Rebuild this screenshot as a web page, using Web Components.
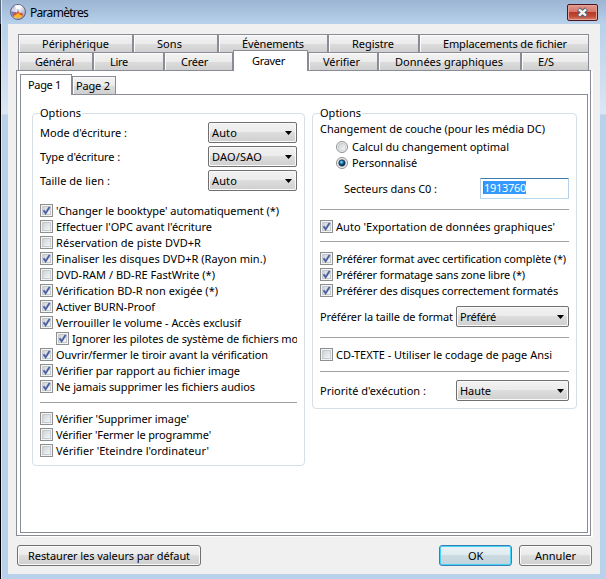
<!DOCTYPE html>
<html lang="fr">
<head>
<meta charset="utf-8">
<title>Paramètres</title>
<style>
html,body{margin:0;width:606px;height:579px;overflow:hidden}
body{font:11px/16px "Noto Sans","Open Sans",sans-serif;color:#000}
</style>
</head>
<body>
<app-window>
  <tab-strip slot="tabs">
    <tab-item w="115" tw="67" tx="24">Périphérique</tab-item><tab-item w="85" tw="25" tx="24">Sons</tab-item><tab-item w="110" tw="62" tx="24">Évènements</tab-item><tab-item w="91" tw="42" tx="24">Registre</tab-item><tab-item w="170" tw="124" tx="24">Emplacements de fichier</tab-item>
  </tab-strip>
  <tab-strip slot="tabs">
    <tab-item w="75" tw="39" tx="17">Général</tab-item><tab-item w="71" tw="18" tx="17">Lire</tab-item><tab-item w="69" tw="27" tx="17">Créer</tab-item><tab-item w="75" tw="33" tx="19" active>Graver</tab-item><tab-item w="70" tw="37" tx="15">Vérifier</tab-item><tab-item w="143" tw="108" tx="17">Données graphiques</tab-item><tab-item w="68" tw="16" tx="17">E/S</tab-item>
  </tab-strip>
  <tab-strip slot="pages" class="pages">
    <tab-item w="52" tw="33" tx="8" active>Page 1</tab-item><tab-item w="44" tw="34" tx="4">Page 2</tab-item>
  </tab-strip>

  <group-box slot="content" w="273" h="353" legend="Options">
    <form-row h="24" top="8"><fit-text w="87">Mode d'écriture :</fit-text><combo-box w="89" tw="25">Auto</combo-box></form-row>
    <form-row h="24"><fit-text w="80">Type d'écriture :</fit-text><combo-box w="89" tw="50">DAO/SAO</combo-box></form-row>
    <form-row h="24"><fit-text w="70">Taille de lien :</fit-text><combo-box w="89" tw="25">Auto</combo-box></form-row>
    <check-box checked top="10" tw="223">'Changer le booktype' automatiquement (*)</check-box>
    <check-box tw="156">Effectuer l'OPC avant l'écriture</check-box>
    <check-box tw="145">Réservation de piste DVD+R</check-box>
    <check-box checked tw="210">Finaliser les disques DVD+R (Rayon min.)</check-box>
    <check-box tw="159">DVD-RAM / BD-RE FastWrite (*)</check-box>
    <check-box checked tw="162">Vérification BD-R non exigée (*)</check-box>
    <check-box checked tw="99">Activer BURN-Proof</check-box>
    <check-box checked tw="185">Verrouiller le volume - Accès exclusif</check-box>
    <check-box checked indent="16" tw="226">Ignorer les pilotes de système de fichiers mo</check-box>
    <check-box checked tw="212">Ouvrir/fermer le tiroir avant la vérification</check-box>
    <check-box checked tw="184">Vérifier par rapport au fichier image</check-box>
    <check-box checked tw="199">Ne jamais supprimer les fichiers audios</check-box>
    <rule-line top="7" bottom="8"></rule-line>
    <check-box tw="133">Vérifier 'Supprimer image'</check-box>
    <check-box tw="155">Vérifier 'Fermer le programme'</check-box>
    <check-box tw="153">Vérifier 'Eteindre l'ordinateur'</check-box>
  </group-box>

  <group-box slot="content" w="265" h="296" legend="Options">
    <form-row h="16" top="8"><fit-text w="225">Changement de couche (pour les média DC)</fit-text></form-row>
    <radio-button top="2" tw="157">Calcul du changement optimal</radio-button>
    <radio-button checked tw="65">Personnalisé</radio-button>
    <form-row h="21" top="7" indent="24"><fit-text w="93">Secteurs dans C0 :</fit-text><text-input w="89" tw="43">1913760</text-input></form-row>
    <rule-line top="10" bottom="9"></rule-line>
    <check-box checked tw="219">Auto 'Exportation de données graphiques'</check-box>
    <rule-line top="6" bottom="9"></rule-line>
    <check-box checked tw="230">Préférer format avec certification complète (*)</check-box>
    <check-box checked tw="189">Préférer formatage sans zone libre (*)</check-box>
    <check-box checked tw="222">Préférer des disques correctement formatés</check-box>
    <form-row h="22" top="7"><fit-text w="133">Préférer la taille de format</fit-text><combo-box w="113" tw="36">Préféré</combo-box></form-row>
    <rule-line top="9" bottom="9"></rule-line>
    <check-box tw="216">CD-TEXTE - Utiliser le codage de page Ansi</check-box>
    <rule-line top="8" bottom="8"></rule-line>
    <form-row h="22"><fit-text w="106">Priorité d'exécution :</fit-text><combo-box w="113" tw="31">Haute</combo-box></form-row>
  </group-box>

  <push-button slot="buttons" w="184" tw="162">Restaurer les valeurs par défaut</push-button>
  <push-button slot="buttons" w="73" tw="15" primary>OK</push-button>
  <push-button slot="buttons" w="73" tw="41">Annuler</push-button>
</app-window>

<script>
class Base extends HTMLElement {
  connectedCallback() {
    if (this.shadowRoot) return;
    this.attachShadow({ mode: 'open' }).innerHTML = this.view();
    this.after?.();
  }
  a(name, fallback = 0) { return this.getAttribute(name) ?? fallback; }
}

/* Text whose tracking is adjusted so that the run fills a given width. */
customElements.define('fit-text', class extends Base {
  view() { return `<style>:host{display:block;white-space:pre;flex:none;width:${this.a('w')}px}span{display:inline-block}</style><span><slot></slot></span>`; }
  after() {
    const s = this.shadowRoot.querySelector('span');
    const fit = () => {
      s.style.letterSpacing = '0px';
      const n = this.textContent.length, w = s.getBoundingClientRect().width;
      if (w && n) s.style.letterSpacing = ((+this.a('w') - w) / n).toFixed(3) + 'px';
    };
    requestAnimationFrame(fit);
    fit();
  }
});

customElements.define('tab-strip', class extends Base {
  view() { return `<style>:host{display:flex;height:18px;align-items:flex-end}:host(.pages){height:20px}</style><slot></slot>`; }
});

customElements.define('tab-item', class extends Base {
  view() { return `<style>
    :host{box-sizing:border-box;display:flex;align-items:center;height:18px;width:${this.a('w')}px;flex:none;padding-left:${this.a('tx') - 1}px;
      border:solid #898c95;border-width:1px 1px 0 1px;box-shadow:inset 1px 1px #fcfcfc;
      background:linear-gradient(#f3f3f3,#ebebeb 50%,#dddddd 51%,#cfcfcf)}
    :host([active]){height:21px;margin-bottom:-1px;background:#fff;box-shadow:none;position:relative;z-index:2;padding-bottom:1px}
    fit-text{margin-top:1px}
  </style><fit-text w="${this.a('tw')}">${this.textContent}</fit-text>`; }
});

customElements.define('group-box', class extends Base {
  view() { return `<style>
    :host{box-sizing:border-box;display:flex;flex-direction:column;width:${this.a('w')}px;height:${+this.a('h')}px;border:1px solid #d5dfe5;border-radius:4px;padding:0 7px;flex:none}
    .legend{height:16px;margin-top:-9px;margin-bottom:-8px;display:flex}
    .legend fit-text{background:#fff;padding-right:1px}
  </style><div class="legend"><fit-text w="41">${this.a('legend')}</fit-text></div><slot></slot>`; }
});

customElements.define('form-row', class extends Base {
  view() { return `<style>:host{flex:none;display:flex;justify-content:space-between;align-items:center;height:${this.a('h')}px;margin-top:${this.a('top')}px;padding-left:${this.a('indent')}px}</style><slot></slot>`; }
});

customElements.define('rule-line', class extends Base {
  view() { return `<style>:host{flex:none;display:block;height:1px;background:#a0a0a0;margin:${this.a('top')}px 0 ${this.a('bottom')}px}</style>`; }
});

customElements.define('combo-box', class extends Base {
  view() { return `<style>
    :host{box-sizing:border-box;display:flex;align-items:center;justify-content:space-between;width:${this.a('w')}px;height:21px;flex:none;padding:0 4px 0 3px;margin-bottom:1px;
      border:1px solid #707070;border-radius:2px;box-shadow:inset 0 0 0 1px #fafafa;background:linear-gradient(#f2f2f2,#ebebeb 49%,#dddddd 50%,#cfcfcf)}
  </style><fit-text w="${this.a('tw')}">${this.textContent}</fit-text><svg width="7" height="4"><path d="M0 0h7L3.5 4z"/></svg>`; }
});

customElements.define('check-box', class extends Base {
  view() {
    const mark = this.hasAttribute('checked') ? '<path d="M3.5 6.2L5.6 9.3L9.6 3" fill="none" stroke="#4b619e" stroke-width="1.9"/>' : '';
    return `<style>
    :host{flex:none;display:flex;align-items:center;height:16px;gap:3px;overflow:hidden;margin-top:${this.a('top')}px;padding-left:${this.a('indent')}px}
    svg{flex:none;margin-top:-1px}
  </style><svg width="13" height="13"><defs><linearGradient id="g" x2="1" y2="1"><stop stop-color="#cbcfd5"/><stop offset="1" stop-color="#f8f8f8"/></linearGradient></defs>
    <rect x=".5" y=".5" width="12" height="12" fill="#f4f4f4" stroke="#8e8f8f"/><rect x="2.5" y="2.5" width="8" height="8" fill="url(#g)" stroke="#c5c9d0"/>${mark}</svg><fit-text w="${this.a('tw')}">${this.textContent}</fit-text>`;
  }
});

customElements.define('radio-button', class extends Base {
  view() {
    const on = this.hasAttribute('checked');
    return `<style>
    :host{flex:none;display:flex;align-items:center;height:16px;gap:4px;padding-left:16px;margin-top:${this.a('top')}px}svg{flex:none}
  </style><svg width="12" height="12"><defs><linearGradient id="g" x2="1" y2="1"><stop stop-color="#c9cdd3"/><stop offset="1" stop-color="#fafafa"/></linearGradient>
    <radialGradient id="b" cx=".4" cy=".35"><stop stop-color="#9fe4fb"/><stop offset=".45" stop-color="#2b8fc4"/><stop offset="1" stop-color="#0b2c50"/></radialGradient></defs>
    <circle cx="6" cy="6" r="5.5" fill="#f4f4f4" stroke="#8e8f8f"/><circle cx="6" cy="6" r="3.9" fill="url(#g)" stroke="#c0c5cb" stroke-width=".7"/>${on ? '<circle cx="6" cy="6" r="3.1" fill="url(#b)" stroke="#17375c" stroke-width=".9"/>' : ''}</svg><fit-text w="${this.a('tw')}">${this.textContent}</fit-text>`;
  }
});

customElements.define('text-input', class extends Base {
  view() { return `<style>
    :host{box-sizing:border-box;display:block;width:${this.a('w')}px;height:21px;flex:none;padding:2px;background:#fff;border:1px solid #b5cfe7;border-top-color:#3d7bad;border-bottom-color:#b7d9ed;border-radius:1px}
    .sel{display:flex;align-items:center;width:${this.a('tw')}px;height:13px;background:#39f;color:#fff;box-sizing:border-box;border-left:1px solid #c60}
  </style><div class="sel"><fit-text w="${this.a('tw') - 1}">${this.textContent}</fit-text></div>`; }
});

customElements.define('push-button', class extends Base {
  view() { return `<style>
    :host{box-sizing:border-box;display:flex;align-items:center;justify-content:center;width:${this.a('w')}px;height:21px;flex:none;
      border:1px solid #707070;border-radius:3px;box-shadow:inset 0 0 0 1px #fafafa;background:linear-gradient(#f2f2f2,#ebebeb 49%,#dddddd 50%,#cfcfcf)}
    :host([primary]){border-color:#3c7fb1;box-shadow:inset 0 0 0 1px #42d3fb;margin-left:auto;background:linear-gradient(#eaf1f5,#dfebf0 49%,#ccdbe2 50%,#c2d3db)}
    fit-text{margin-top:1px}
  </style><fit-text w="${this.a('tw')}">${this.textContent}</fit-text>`; }
});

customElements.define('disc-icon', class extends Base {
  view() { return `<style>:host{display:block;width:16px;height:16px}svg{display:block}</style><svg width="16" height="16" viewBox="0 0 16 16">
    <defs><linearGradient id="d" x2="1" y2="1"><stop stop-color="#a4aad2"/><stop offset=".45" stop-color="#eeeef8"/><stop offset="1" stop-color="#77779a"/></linearGradient></defs>
    <circle cx="8" cy="8" r="7.500" fill="url(#d)" stroke="#62627c"/>
    <path d="M8 7L4.500 1.800Q8 .2 12 2z" fill="#fff"/><path d="M1 7.500L7 8L3.500 13.200Q1 11.500 1 7.500z" fill="#8078b0"/>
    <circle cx="8" cy="6.300" r="1.500" fill="#b9bdd6" stroke="#fff" stroke-width=".6"/>
    <path d="M3.500 12.500Q3.200 9.800 5 8.800L6.200 9.400L8 6.600L9.800 9.400L11.400 8.600Q13.400 10 12.600 12.500z" fill="#d2502a"/>
    <path d="M4 11.600L6.200 10.800L8 9L10 10.800L12.300 11.400L11.800 13.300Q8 14.300 4.400 13.300z" fill="#ffb820"/></svg>`; }
});

customElements.define('close-button', class extends Base {
  view() { return `<style>
    :host{box-sizing:border-box;display:flex;align-items:center;justify-content:center;width:31px;height:17px;border:1px solid #4b1620;border-radius:2px;box-shadow:inset 0 0 0 1px #e4a196;
      background:linear-gradient(#e29a90,#d4756a 46%,#bb3924 50%,#c14a36 75%,#d98370)}
  </style><svg width="13" height="11"><path d="M2.500 2L10.500 9M10.500 2L2.500 9" stroke="#59606f" stroke-width="4.400"/><path d="M3 2.400L10 8.600M10 2.400L3 8.600" stroke="#f4f4f4" stroke-width="2.400"/></svg>`; }
});

customElements.define('app-window', class extends Base {
  view() { return `<style>
    :host{box-sizing:border-box;display:flex;flex-direction:column;width:606px;height:579px;padding:0 6px 5px 8px;
      background:linear-gradient(#5f6f80,#4a5a6a 24px,#000 24px) 0 0/1px 100% no-repeat,linear-gradient(#dbe8f5,#dbe8f5) 1px 0/1px 100% no-repeat,
        linear-gradient(#9bb5d3,#a9c3df 12px,#b9d1ea 24px,#b9d1ea 28px,#d9e6f5 110px,#d9e6f5 114px,#b9d1ea 115px)}
    header{height:24px;flex:none;display:flex;align-items:flex-start;padding:0 2px 0 2px}
    disc-icon{margin-top:4px}
    header fit-text{font-size:12px;margin:5px auto 0 4px}
    close-button{margin-top:4px}
    .client{box-sizing:border-box;flex:1;background:#f0f0f0;padding:10px 8px 8px 8px;display:flex;flex-direction:column}
    .tabs{padding-left:2px}
    .panel{box-sizing:border-box;width:575px;height:466px;flex:none;border:1px solid #898c95;background:#fff;box-shadow:2px 1px #fff;padding:3px}
    .page{box-sizing:border-box;width:568px;height:439px;border:1px solid #898c95;background:#fff;display:flex;align-items:flex-start;gap:7px;padding:18px 0 0 11px}
    footer{display:flex;gap:7px;margin-top:9px;padding-left:1px}
  </style>
  <header><disc-icon></disc-icon><fit-text w="58">Paramètres</fit-text><close-button></close-button></header>
  <div class="client"><div class="tabs"><slot name="tabs"></slot></div>
    <div class="panel"><slot name="pages"></slot><div class="page"><slot name="content"></slot></div></div>
    <footer><slot name="buttons"></slot></footer></div>`; }
});
</script>
</body>
</html>
